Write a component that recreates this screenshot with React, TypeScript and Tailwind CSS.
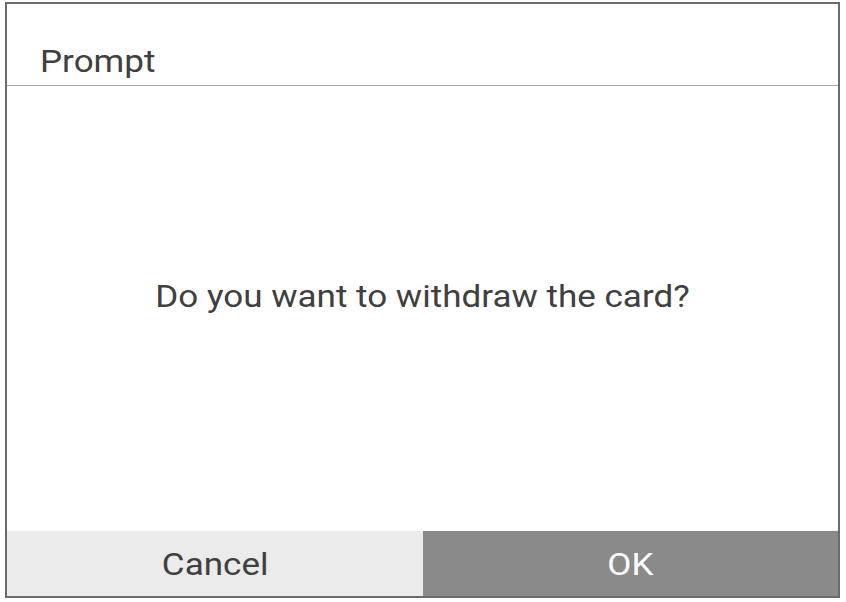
export default function App() {
  return (
    <div className="w-[846px] h-[602px] bg-white pl-[5px] pt-[2px] pr-[6px] pb-[4px] font-['Roboto',sans-serif]">
      <div className="w-full h-full flex flex-col border-2 border-[#6b6b6b] bg-white">
        <div className="h-[82px] flex items-end pl-[33px] pb-[3px] border-b border-[#a8a8a8]">
          <h3 className="inline-block origin-left scale-x-[1.13] text-[31px] leading-[40px] text-[#404040]">Prompt</h3>
        </div>

        <div className="flex-1 flex items-center justify-center pb-[24px]">
          <p className="inline-block scale-x-[1.13] text-[31px] leading-[40px] text-[#404040]">Do you want to withdraw the card?</p>
        </div>

        <div className="h-[65px] grid grid-cols-2">
          <button className="bg-[#ebebeb] pt-[4px] text-[#404040]">
            <span className="inline-block scale-x-[1.13] text-[31px]">Cancel</span>
          </button>
          <button className="bg-[#8a8a8a] pt-[4px] text-white">
            <span className="inline-block scale-x-[1.13] text-[31px]">OK</span>
          </button>
        </div>
      </div>
    </div>
  );
}
